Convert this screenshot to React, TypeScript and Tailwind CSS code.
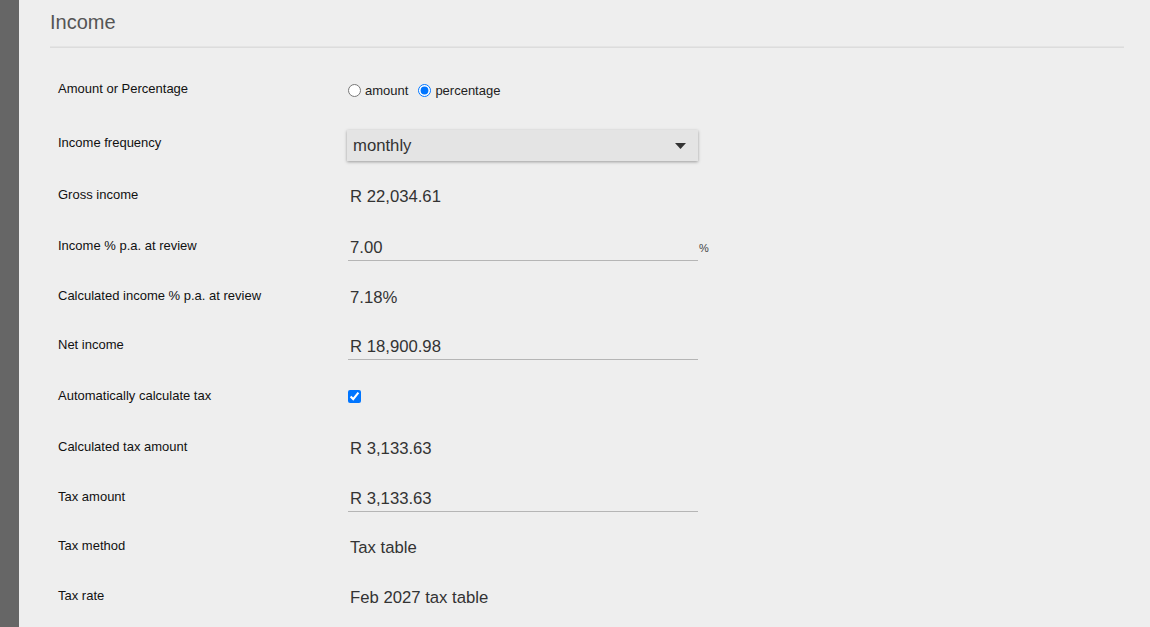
import React from "react";

const font = { fontFamily: '"Liberation Sans", Arial, sans-serif' };

type Row = { label: string; h: string; kind: "radio" | "select" | "text" | "input" | "check"; value?: string; suffix?: string };

const rows: Row[] = [
  { label: "Amount or Percentage", h: "h-[54px]", kind: "radio" },
  { label: "Income frequency", h: "h-[53px]", kind: "select", value: "monthly" },
  { label: "Gross income", h: "h-[51px]", kind: "text", value: "R 22,034.61" },
  { label: "Income % p.a. at review", h: "h-[51px]", kind: "input", value: "7.00", suffix: "%" },
  { label: "Calculated income % p.a. at review", h: "h-[49px]", kind: "text", value: "7.18%" },
  { label: "Net income", h: "h-[50px]", kind: "input", value: "R 18,900.98" },
  { label: "Automatically calculate tax", h: "h-[52px]", kind: "check" },
  { label: "Calculated tax amount", h: "h-[50px]", kind: "text", value: "R 3,133.63" },
  { label: "Tax amount", h: "h-[49px]", kind: "input", value: "R 3,133.63" },
  { label: "Tax method", h: "h-[50px]", kind: "text", value: "Tax table" },
  { label: "Tax rate", h: "h-[50px]", kind: "text", value: "Feb 2027 tax table" },
];

const Field: React.FC<{ row: Row }> = ({ row }) => {
  if (row.kind === "radio") {
    return (
      <div className="flex items-center text-[13px] text-[#222] mt-[3px]">
        <label className="flex items-center">
          <input type="radio" name="amt" className="m-0 w-[13px] h-[13px]" />
          <span className="ml-[4px]">amount</span>
        </label>
        <label className="flex items-center ml-[10px]">
          <input type="radio" name="amt" defaultChecked className="m-0 w-[13px] h-[13px]" />
          <span className="ml-[4px]">percentage</span>
        </label>
      </div>
    );
  }
  if (row.kind === "select") {
    return (
      <div className="w-[351px] h-[31px] -ml-[1px] mt-[6px] bg-[#e4e4e4] shadow-[0_1px_3px_rgba(0,0,0,0.35)] flex items-center justify-between pl-[6px] pr-[12px]">
        <span className="text-[16.7px] text-[#333]">{row.value}</span>
        <svg width="11" height="6" viewBox="0 0 11 6">
          <path d="M0 0 L11 0 L5.5 6 Z" fill="#333" />
        </svg>
      </div>
    );
  }
  if (row.kind === "input") {
    return (
      <div className="flex items-end mt-[3px]">
        <div className="w-[350px] h-[27px] border-b border-[#b5b5b5] flex items-center pl-[2px] pt-[2px]">
          <span className="text-[16.7px] text-[#333]">{row.value}</span>
        </div>
        {row.suffix && <span className="ml-[1px] mb-[4px] text-[11px] text-[#444]">{row.suffix}</span>}
      </div>
    );
  }
  if (row.kind === "check") {
    return <input type="checkbox" defaultChecked className="m-0 w-[13px] h-[13px]" />;
  }
  return <span className="ml-[2px] mt-[4px] text-[16.7px] text-[#333]">{row.value}</span>;
};

export default function App() {
  return (
    <div className="flex w-[1150px] h-[627px] overflow-hidden bg-[#eeeeee]" style={font}>
      <div className="w-[19px] shrink-0 bg-[#666666]" />
      <div className="flex-1 pl-[31px] pr-[26px]">
        <h2 className="pt-[10px] text-[20px] leading-[24px] text-[#555]">Income</h2>
        <div className="mt-[12px] h-[2px] border-t border-[#e4e4e4] border-b-[#dcdcdc] border-b" />
        <div className="mt-[14px]">
          {rows.map((r) => (
            <div key={r.label} className={`flex items-center ${r.h}`}>
              <div className="w-[298px] pl-[8px] text-[13px] text-[#111]">{r.label}</div>
              <Field row={r} />
            </div>
          ))}
        </div>
      </div>
    </div>
  );
}
